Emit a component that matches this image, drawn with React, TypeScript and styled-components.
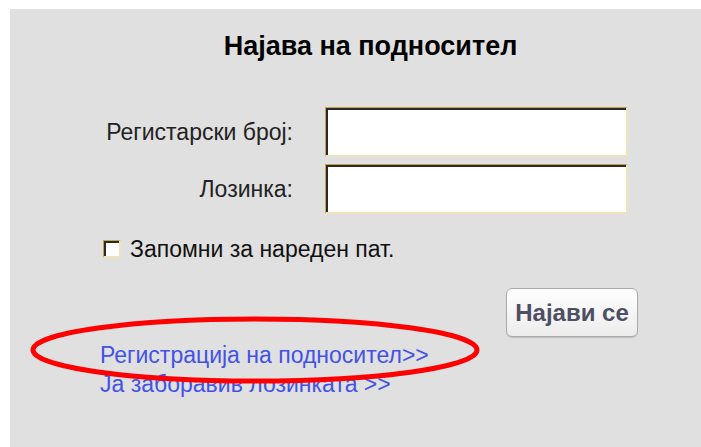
import React from 'react';
import styled, { createGlobalStyle } from 'styled-components';

const GlobalStyle = createGlobalStyle`
  html, body {
    margin: 0;
    padding: 0;
    background: #fff;
  }
  body {
    padding: 9px 0 0 10px;
    font-family: "Liberation Sans", Arial, sans-serif;
  }
`;

const Panel = styled.div`
  position: relative;
  background: #e0e0e0;
  height: 438px;
  box-sizing: border-box;
  padding-top: 22px;
`;

const Title = styled.h2`
  margin: 0 0 45px 30px;
  text-align: center;
  font-size: 27px;
  line-height: 31px;
  font-weight: bold;
  color: #000;
`;

const FormGrid = styled.div`
  display: grid;
  grid-template-columns: 283px 303px;
  column-gap: 32px;
  row-gap: 7px;
  align-items: center;
`;

const Label = styled.label`
  text-align: right;
  font-size: 23px;
  line-height: 26px;
  color: #222;
`;

const TextInput = styled.input`
  box-sizing: border-box;
  width: 303px;
  height: 50px;
  margin: 0;
  background: #fff;
  border-style: solid;
  border-width: 1px 2px 2px 1px;
  border-color: #c2a24a #efe3bd #efe3bd #c2a24a;
  box-shadow: inset 2px 2px 0 #2a2a2a;
  outline: none;
  padding: 0 6px;
  font-size: 20px;
`;

const CheckRow = styled.label`
  display: flex;
  align-items: center;
  gap: 9px;
  margin: 22px 0 0 93px;
  font-size: 23px;
  line-height: 26px;
  color: #111;
`;

const Box = styled.span`
  display: inline-block;
  box-sizing: border-box;
  width: 18px;
  height: 18px;
  background: #fff;
  border-style: solid;
  border-width: 1px 2px 2px 1px;
  border-color: #c2a24a #efe3bd #efe3bd #c2a24a;
  box-shadow: inset 2px 2px 0 #2a2a2a;
`;

const ButtonRow = styled.div`
  display: flex;
  justify-content: flex-end;
  padding-right: 63px;
  margin-top: 26px;
`;

const Button = styled.button`
  width: 132px;
  height: 49px;
  padding: 0;
  border: 1px solid #a9a9a9;
  border-radius: 6px;
  background: linear-gradient(#ffffff, #ececec);
  box-shadow: 0 1px 1px rgba(0, 0, 0, 0.15);
  font-family: "Liberation Sans", Arial, sans-serif;
  font-weight: bold;
  font-size: 24px;
  color: #4f4f63;
`;

const Links = styled.div`
  display: flex;
  flex-direction: column;
  margin: 4px 0 0 90px;
  font-size: 23px;
  line-height: 29px;
`;

const LinkText = styled.a`
  color: #4352e6;
  text-decoration: none;
`;

const Mark = styled.svg`
  position: absolute;
  left: 20px;
  top: 307px;
  pointer-events: none;
`;

const App: React.FC = () => (
  <>
    <GlobalStyle />
    <Panel>
      <Title>Најава на подносител</Title>
      <FormGrid>
        <Label>Регистарски број:</Label>
        <TextInput type="text" />
        <Label>Лозинка:</Label>
        <TextInput type="password" />
      </FormGrid>
      <CheckRow>
        <Box />
        Запомни за нареден пат.
      </CheckRow>
      <ButtonRow>
        <Button>Најави се</Button>
      </ButtonRow>
      <Links>
        <LinkText href="#">Регистрација на подносител&gt;&gt;</LinkText>
        <LinkText href="#">Ја заборавив лозинката &gt;&gt;</LinkText>
      </Links>
      <Mark width="460" height="80" viewBox="0 0 460 80">
        <ellipse cx="225" cy="34" rx="222" ry="31" fill="none" stroke="#ff0000" strokeWidth="5" />
      </Mark>
    </Panel>
  </>
);

export default App;
